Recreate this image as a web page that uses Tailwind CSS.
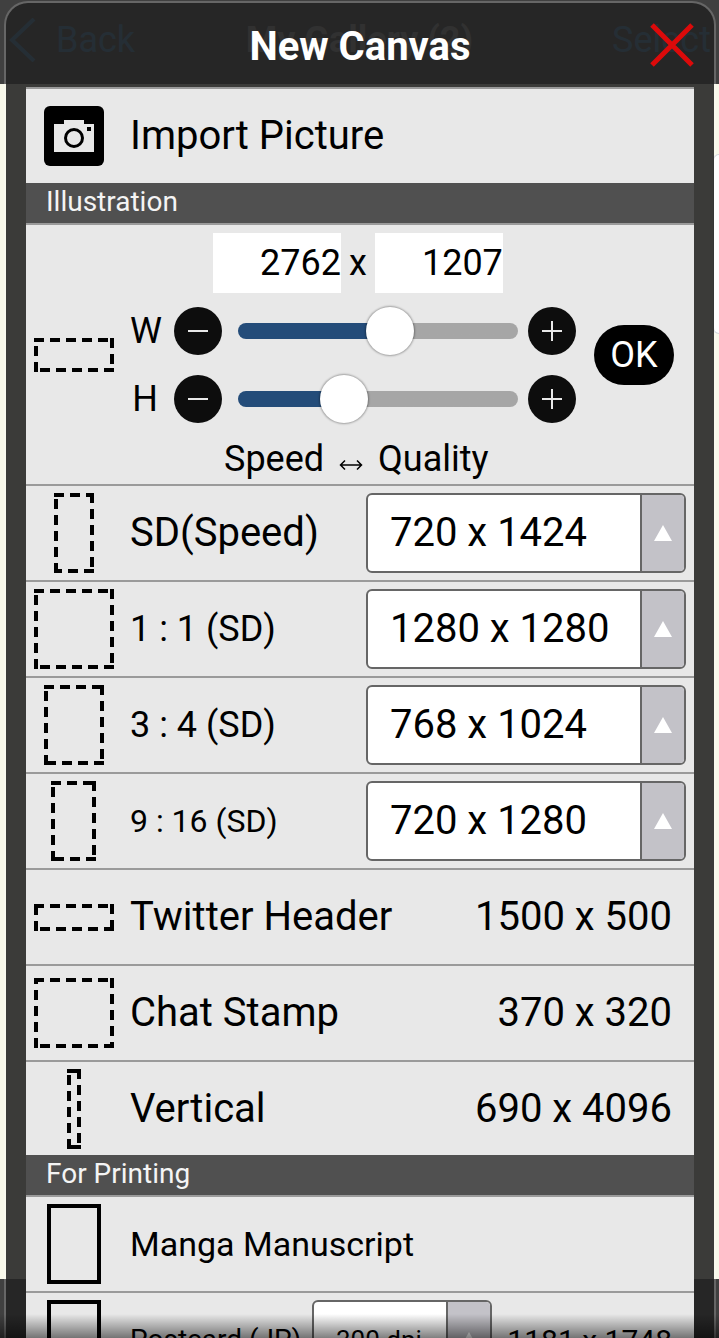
<!DOCTYPE html>
<html lang="en">
<head>
<meta charset="utf-8">
<meta name="viewport" content="width=device-width, initial-scale=1">
<title>New Canvas</title>
<script src="https://cdn.jsdelivr.net/npm/@tailwindcss/browser@4"></script>
</head>
<body class="h-screen overflow-hidden bg-[#f8f8ea] font-[Roboto,sans-serif] text-black">
<!-- Gallery screen behind the dialog -->
<div class="absolute inset-0 flex flex-col justify-between overflow-hidden" aria-hidden="true">
  <div class="grid h-[84px] grid-cols-[1fr_auto_1fr] items-center bg-[#404040] px-2 pb-1 text-4xl text-[#3c8cc8]">
    <span class="flex items-center gap-5">
      <svg class="h-11 w-7" viewBox="0 0 28 44" fill="none" stroke="currentColor" stroke-width="4"><path d="M26 1L4 22L26 43"/></svg>
      <span>Back</span>
    </span>
    <span class="font-bold text-[#a0a0a0]">My Gallery (2)</span>
    <span class="text-right">Select</span>
  </div>
  <div class="h-[59px] bg-[#404040]"></div>
</div>
<div class="absolute top-[154px] right-0 h-[180px] w-1.5 rounded-l-lg border border-r-0 border-gray-300 bg-white"></div>

<!-- Dialog -->
<main class="relative mr-[3px] ml-1 mt-px flex h-screen flex-col rounded-t-3xl border-2 border-b-0 border-white/20 bg-[#232323]/89 bg-clip-padding px-5">
  <header class="relative flex h-[84px] shrink-0 items-center justify-center">
    <h1 class="pt-1 text-[40px] leading-[44px] font-bold text-white">New Canvas</h1>
    <button class="absolute top-5 right-0 size-[44px]" aria-label="Close">
      <svg class="size-full" viewBox="0 0 44 44" stroke="#dc0a0a" stroke-width="5"><path d="M2 2L42 42M42 2L2 42"/></svg>
    </button>
  </header>

  <div class="flex min-h-0 flex-1 flex-col overflow-hidden bg-[#e8e8e8]">
    <button class="flex h-24 shrink-0 items-center gap-[26px] border-t-2 border-[#9a9a9a] pl-[18px] text-left text-[40px]">
      <svg class="size-[60px]" viewBox="0 0 60 60"><rect width="60" height="60" rx="6"/><path fill="#e8e8e8" d="M20 14h20v4h10v28H10V18h10z"/><circle cx="30" cy="32" r="8.5" fill="none" stroke="#000" stroke-width="3"/><rect x="43" y="21" width="4" height="4"/></svg>
      <span>Import Picture</span>
    </button>

    <h2 class="h-10 shrink-0 bg-[#505050] pl-5 text-[28px] leading-[38px] text-[#f4f4f4]">Illustration</h2>
    <section class="flex h-[261px] shrink-0 items-center border-t-2 border-[#9a9a9a] pl-2 text-4xl">
      <svg class="h-[34px] w-20" viewBox="0 0 80 34" fill="none" stroke="#000" stroke-width="4" stroke-dasharray="10 6"><path d="M0 2H80M78 0V34M80 32H0M2 34V0"/></svg>
      <div class="flex min-w-0 flex-1 flex-col self-stretch pt-2 pl-4">
        <div class="flex items-center gap-2 pl-[83px]">
          <input class="h-[60px] w-32 bg-white text-right" aria-label="Width in pixels" value="2762">
          <span>x</span>
          <input class="h-[60px] w-32 bg-white text-right" aria-label="Height in pixels" value="1207">
        </div>
        <div class="mt-1 flex h-[68px] items-center">
          <label for="w" class="w-[30px]">W</label>
          <button class="ml-3.5 grid size-12 place-items-center rounded-full bg-[#0d0d0d]" aria-label="Decrease width"><svg class="size-5" viewBox="0 0 20 20" stroke="#e8e8e8" stroke-width="2"><path d="M0 10H20"/></svg></button>
          <input id="w" type="range" min="0" max="1000" value="553" class="mr-2.5 ml-4 h-4 min-w-0 flex-1 appearance-none rounded-full bg-linear-to-r from-[#244c79] from-55% to-[#a6a6a6] to-55% [&::-webkit-slider-thumb]:size-12 [&::-webkit-slider-thumb]:appearance-none [&::-webkit-slider-thumb]:rounded-full [&::-webkit-slider-thumb]:bg-white [&::-webkit-slider-thumb]:shadow-[0_0_2px_1px_#00000050]">
          <button class="mr-[18px] grid size-12 place-items-center rounded-full bg-[#0d0d0d]" aria-label="Increase width"><svg class="size-5" viewBox="0 0 20 20" stroke="#e8e8e8" stroke-width="2"><path d="M0 10H20M10 0V20"/></svg></button>
        </div>
        <div class="flex h-[68px] items-center">
          <label for="h" class="w-[30px] text-center">H</label>
          <button class="ml-3.5 grid size-12 place-items-center rounded-full bg-[#0d0d0d]" aria-label="Decrease height"><svg class="size-5" viewBox="0 0 20 20" stroke="#e8e8e8" stroke-width="2"><path d="M0 10H20"/></svg></button>
          <input id="h" type="range" min="0" max="1000" value="353" class="mr-2.5 ml-4 h-4 min-w-0 flex-1 appearance-none rounded-full bg-linear-to-r from-[#244c79] from-38% to-[#a6a6a6] to-38% [&::-webkit-slider-thumb]:size-12 [&::-webkit-slider-thumb]:appearance-none [&::-webkit-slider-thumb]:rounded-full [&::-webkit-slider-thumb]:bg-white [&::-webkit-slider-thumb]:shadow-[0_0_2px_1px_#00000050]">
          <button class="mr-[18px] grid size-12 place-items-center rounded-full bg-[#0d0d0d]" aria-label="Increase height"><svg class="size-5" viewBox="0 0 20 20" stroke="#e8e8e8" stroke-width="2"><path d="M0 10H20M10 0V20"/></svg></button>
        </div>
        <p class="flex items-center gap-[15px] pt-1.5 pl-[94px]">Speed
          <svg class="mt-3 h-3 w-6" viewBox="0 0 24 12" fill="none" stroke="#000" stroke-width="1.500"><path d="M2 6H22M6 1.500L1.500 6L6 10.500M18 1.500L22.500 6L18 10.500"/></svg>
          Quality</p>
      </div>
      <button class="mr-5 h-[60px] w-20 rounded-full bg-black text-white">OK</button>
    </section>

    <div class="flex h-24 shrink-0 items-center border-t-2 border-[#9a9a9a] pr-2 pl-2">
      <span class="flex w-20 justify-center"><svg class="h-20 w-10" viewBox="0 0 40 80" fill="none" stroke="#000" stroke-width="4" stroke-dasharray="10 6"><path d="M0 2H40M38 0V80M40 78H0M2 80V0"/></svg></span>
      <label for="s1" class="ml-4 flex-1 text-[40px]">SD(Speed)</label>
      <span class="flex h-20 w-80 overflow-hidden rounded-md border-2 border-[#666] bg-white"><select id="s1" class="min-w-0 flex-1 appearance-none pl-[22px] text-[40px]"><option>720 x 1424</option></select><span class="grid w-11 place-items-center border-l-2 border-[#666] bg-[#c3c2c8]"><svg class="h-4 w-[18px]" viewBox="0 0 18 16" fill="#fff"><path d="M9 0L18 16H0z"/></svg></span></span>
    </div>
    <div class="flex h-24 shrink-0 items-center border-t-2 border-[#9a9a9a] pr-2 pl-2">
      <span class="flex w-20 justify-center"><svg class="size-20" viewBox="0 0 80 80" fill="none" stroke="#000" stroke-width="4" stroke-dasharray="10 6"><path d="M0 2H80M78 0V80M80 78H0M2 80V0"/></svg></span>
      <label for="s2" class="ml-4 flex-1 text-4xl">1 : 1 (SD)</label>
      <span class="flex h-20 w-80 overflow-hidden rounded-md border-2 border-[#666] bg-white"><select id="s2" class="min-w-0 flex-1 appearance-none pl-[22px] text-[40px]"><option>1280 x 1280</option></select><span class="grid w-11 place-items-center border-l-2 border-[#666] bg-[#c3c2c8]"><svg class="h-4 w-[18px]" viewBox="0 0 18 16" fill="#fff"><path d="M9 0L18 16H0z"/></svg></span></span>
    </div>
    <div class="flex h-24 shrink-0 items-center border-t-2 border-[#9a9a9a] pr-2 pl-2">
      <span class="flex w-20 justify-center"><svg class="h-20 w-[60px]" viewBox="0 0 60 80" fill="none" stroke="#000" stroke-width="4" stroke-dasharray="10 6"><path d="M0 2H60M58 0V80M60 78H0M2 80V0"/></svg></span>
      <label for="s3" class="ml-4 flex-1 text-4xl">3 : 4 (SD)</label>
      <span class="flex h-20 w-80 overflow-hidden rounded-md border-2 border-[#666] bg-white"><select id="s3" class="min-w-0 flex-1 appearance-none pl-[22px] text-[40px]"><option>768 x 1024</option></select><span class="grid w-11 place-items-center border-l-2 border-[#666] bg-[#c3c2c8]"><svg class="h-4 w-[18px]" viewBox="0 0 18 16" fill="#fff"><path d="M9 0L18 16H0z"/></svg></span></span>
    </div>
    <div class="flex h-24 shrink-0 items-center border-t-2 border-[#9a9a9a] pr-2 pl-2">
      <span class="flex w-20 justify-center"><svg class="h-20 w-[46px]" viewBox="0 0 46 80" fill="none" stroke="#000" stroke-width="4" stroke-dasharray="10 6"><path d="M0 2H45M43 0V80M45 78H0M2 80V0"/></svg></span>
      <label for="s4" class="ml-4 flex-1 text-[32px]">9 : 16 (SD)</label>
      <span class="flex h-20 w-80 overflow-hidden rounded-md border-2 border-[#666] bg-white"><select id="s4" class="min-w-0 flex-1 appearance-none pl-[22px] text-[40px]"><option>720 x 1280</option></select><span class="grid w-11 place-items-center border-l-2 border-[#666] bg-[#c3c2c8]"><svg class="h-4 w-[18px]" viewBox="0 0 18 16" fill="#fff"><path d="M9 0L18 16H0z"/></svg></span></span>
    </div>

    <button class="flex h-24 shrink-0 items-center border-t-2 border-[#9a9a9a] pr-[22px] pl-2 text-left text-[40px]">
      <span class="flex w-20 justify-center"><svg class="h-[27px] w-20" viewBox="0 0 80 27" fill="none" stroke="#000" stroke-width="4" stroke-dasharray="10 6"><path d="M0 2H80M78 0V27M80 25H0M2 27V0"/></svg></span>
      <span class="ml-4 flex-1">Twitter Header</span><span>1500 x 500</span>
    </button>
    <button class="flex h-24 shrink-0 items-center border-t-2 border-[#9a9a9a] pr-[22px] pl-2 text-left text-[40px]">
      <span class="flex w-20 justify-center"><svg class="h-[70px] w-20" viewBox="0 0 80 70" fill="none" stroke="#000" stroke-width="4" stroke-dasharray="10 6"><path d="M0 2H80M78 0V70M80 68H0M2 70V0"/></svg></span>
      <span class="ml-4 flex-1">Chat Stamp</span><span>370 x 320</span>
    </button>
    <button class="flex h-[95px] shrink-0 items-center border-t-2 border-[#9a9a9a] pr-[22px] pl-2 text-left text-[40px]">
      <span class="flex w-20 justify-center"><svg class="h-20 w-[14px]" viewBox="0 0 14 80" fill="none" stroke="#000" stroke-width="4" stroke-dasharray="10 6"><path d="M0 2H14M12 0V80M14 78H0M2 80V0"/></svg></span>
      <span class="ml-4 flex-1">Vertical</span><span>690 x 4096</span>
    </button>

    <h2 class="h-10 shrink-0 bg-[#505050] pl-5 text-[28px] leading-[38px] text-[#f4f4f4]">For Printing</h2>
    <button class="flex h-24 shrink-0 items-center border-t-2 border-[#9a9a9a] pl-2 text-left text-[34px]">
      <span class="flex w-20 justify-center"><span class="h-20 w-[54px] border-4 border-black"></span></span>
      <span class="ml-4">Manga Manuscript</span>
    </button>
    <div class="flex h-24 shrink-0 items-center border-t-2 border-[#9a9a9a] pr-[22px] pl-2">
      <span class="flex w-20 shrink-0 justify-center"><span class="h-20 w-[54px] border-4 border-black"></span></span>
      <label for="dpi" class="ml-4 w-[182px] shrink-0 text-[28px] whitespace-nowrap">Postcard (JP)</label>
      <span class="flex h-20 w-[180px] shrink-0 overflow-hidden rounded-md border-2 border-[#666] bg-white"><select id="dpi" class="min-w-0 flex-1 appearance-none pl-[22px] text-[26px]"><option>300 dpi</option></select><span class="grid w-11 place-items-center border-l-2 border-[#666] bg-[#c3c2c8]"><svg class="h-4 w-[18px]" viewBox="0 0 18 16" fill="#fff"><path d="M9 0L18 16H0z"/></svg></span></span>
      <span class="flex-1 text-right text-[30px] whitespace-nowrap">1181 x 1748</span>
    </div>
  </div>
</main>
<div class="pointer-events-none absolute inset-x-0 bottom-0 h-6 bg-linear-to-t from-black/50 to-transparent"></div>
</body>
</html>
